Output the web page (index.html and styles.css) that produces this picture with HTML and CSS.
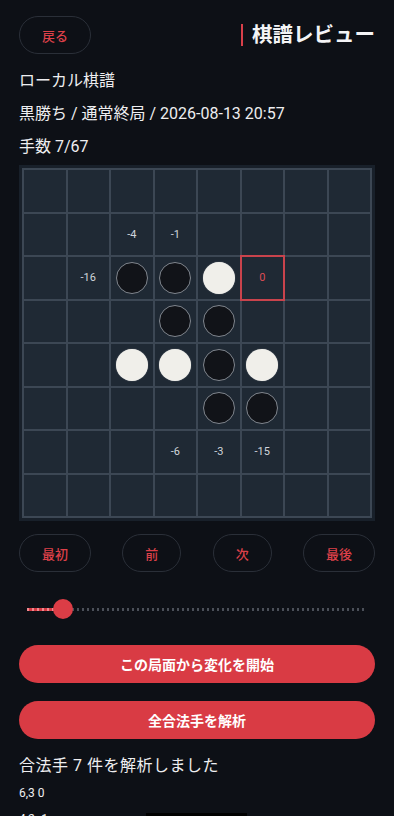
FILE: index.html
```html
<!DOCTYPE html>
<html lang="ja">
<head>
  <meta charset="UTF-8">
  <title>棋譜レビュー</title>
  <link rel="stylesheet" href="styles.css">
</head>
<body>
  <div class="header">
    <button class="pill">戻る</button>
    <h1>棋譜レビュー</h1>
  </div>
  <p class="info">ローカル棋譜</p>
  <p class="info">黒勝ち / 通常終局 / 2026-08-13 20:57</p>
  <p class="info">手数 7/67</p>

  <div class="board">
    <div class="grid" id="grid"></div>
  </div>

  <div class="nav">
    <button class="pill">最初</button>
    <button class="pill">前</button>
    <button class="pill">次</button>
    <button class="pill">最後</button>
  </div>

  <div class="slider">
    <div class="track">
      <div class="fill" style="width: 36px"></div>
      <div class="thumb" style="left: 36px"></div>
    </div>
  </div>

  <button class="action">この局面から変化を開始</button>
  <button class="action">全合法手を解析</button>

  <div class="result">合法手 7 件を解析しました</div>
  <div class="move">6,3 0</div>
  <div class="move">4,2 -1</div>

  <div class="home-bar"></div>

  <script>
    // b = 黒, w = 白, 数字 = 評価値
    var board = [
      ['', '', '', '', '', '', '', ''],
      ['', '', '-4', '-1', '', '', '', ''],
      ['', '-16', 'b', 'b', 'w', '*0', '', ''],
      ['', '', '', 'b', 'b', '', '', ''],
      ['', '', 'w', 'w', 'b', 'w', '', ''],
      ['', '', '', '', 'b', 'b', '', ''],
      ['', '', '', '-6', '-3', '-15', '', ''],
      ['', '', '', '', '', '', '', '']
    ];
    var grid = document.getElementById('grid');
    board.forEach(function (row) {
      row.forEach(function (v) {
        var cell = document.createElement('div');
        cell.className = 'cell';
        if (v === 'b' || v === 'w') {
          var s = document.createElement('div');
          s.className = 'stone ' + (v === 'b' ? 'black' : 'white');
          cell.appendChild(s);
        } else if (v !== '') {
          if (v.charAt(0) === '*') {
            cell.className += ' best';
            v = v.slice(1);
          }
          var n = document.createElement('span');
          n.className = 'score';
          n.innerText = v;
          cell.appendChild(n);
        }
        grid.appendChild(cell);
      });
    });
  </script>
</body>
</html>
```

FILE: styles.css
```css
body {
  margin: 0;
  padding: 16px 19px 0;
  background-color: #0d1016;
  color: #eeeef0;
  font-family: Roboto, "Noto Sans CJK JP", sans-serif;
}
button {
  font-family: inherit;
  cursor: pointer;
}
.header {
  display: flex;
  justify-content: space-between;
  align-items: center;
  height: 38px;
}
.pill {
  height: 38px;
  padding: 0 22px;
  background: transparent;
  border: 1px solid #2a2f38;
  border-radius: 19px;
  color: #dc4049;
  font-size: 13px;
  font-weight: 500;
}
h1 {
  margin: 0;
  font-size: 20.5px;
  font-weight: 700;
  color: #f4f4f6;
  border-left: 2px solid #d8404a;
  padding-left: 9px;
  line-height: 22px;
}
.info {
  margin: 0;
  font-size: 16px;
  line-height: 33px;
}
.header + .info {
  margin-top: 10px;
}
.board {
  margin-top: 2px;
  padding: 3px;
  background-color: #18202a;
}
.grid {
  display: grid;
  grid-template-columns: repeat(8, 1fr);
  grid-template-rows: repeat(8, 41.5px);
  gap: 2px;
  padding: 2px;
  background-color: #3c4754;
}
.cell {
  background-color: #1f2934;
  display: flex;
  align-items: center;
  justify-content: center;
  position: relative;
}
.cell.best {
  outline: 2px solid #c9434c;
}
.score {
  font-size: 11px;
  color: #d0d5dc;
}
.best .score {
  color: #dc4c55;
}
.stone {
  width: 32px;
  height: 32px;
  border-radius: 50%;
  box-sizing: border-box;
}
.black {
  background-color: #111318;
  border: 1px solid #80868e;
}
.white {
  background-color: #f0efea;
  box-shadow: 0 0 1px #9aa0a8;
}
.nav {
  display: flex;
  justify-content: space-between;
  margin-top: 13px;
}
.slider {
  padding: 0 8px;
  margin-top: 27px;
  height: 20px;
  display: flex;
  align-items: center;
}
.track {
  position: relative;
  flex: 1;
  height: 3px;
  background-image: repeating-linear-gradient(90deg, #4b5059 0 2px, transparent 2px 5px);
}
.fill {
  position: absolute;
  left: 0;
  top: 0;
  height: 3px;
  background-color: #d63a43;
  background-image: repeating-linear-gradient(90deg, #f08a90 0 2px, transparent 2px 5px);
}
.thumb {
  position: absolute;
  top: -9px;
  width: 20px;
  height: 20px;
  margin-left: -10px;
  border-radius: 50%;
  background-color: #dc3d46;
}
.action {
  display: block;
  width: 100%;
  height: 38px;
  margin-top: 18px;
  border: none;
  border-radius: 19px;
  background-color: #d93b44;
  color: #fff;
  font-size: 14px;
  font-weight: 700;
}
.slider + .action {
  margin-top: 26px;
}
.result {
  margin-top: 15px;
  font-size: 16px;
  letter-spacing: 0.5px;
  line-height: 24px;
}
.move {
  font-size: 12px;
  line-height: 22px;
  margin-top: 4px;
}
.result + .move {
  margin-top: 4px;
}
.home-bar {
  position: fixed;
  bottom: 0;
  left: 146px;
  width: 101px;
  height: 3px;
  background-color: #000;
}
```
